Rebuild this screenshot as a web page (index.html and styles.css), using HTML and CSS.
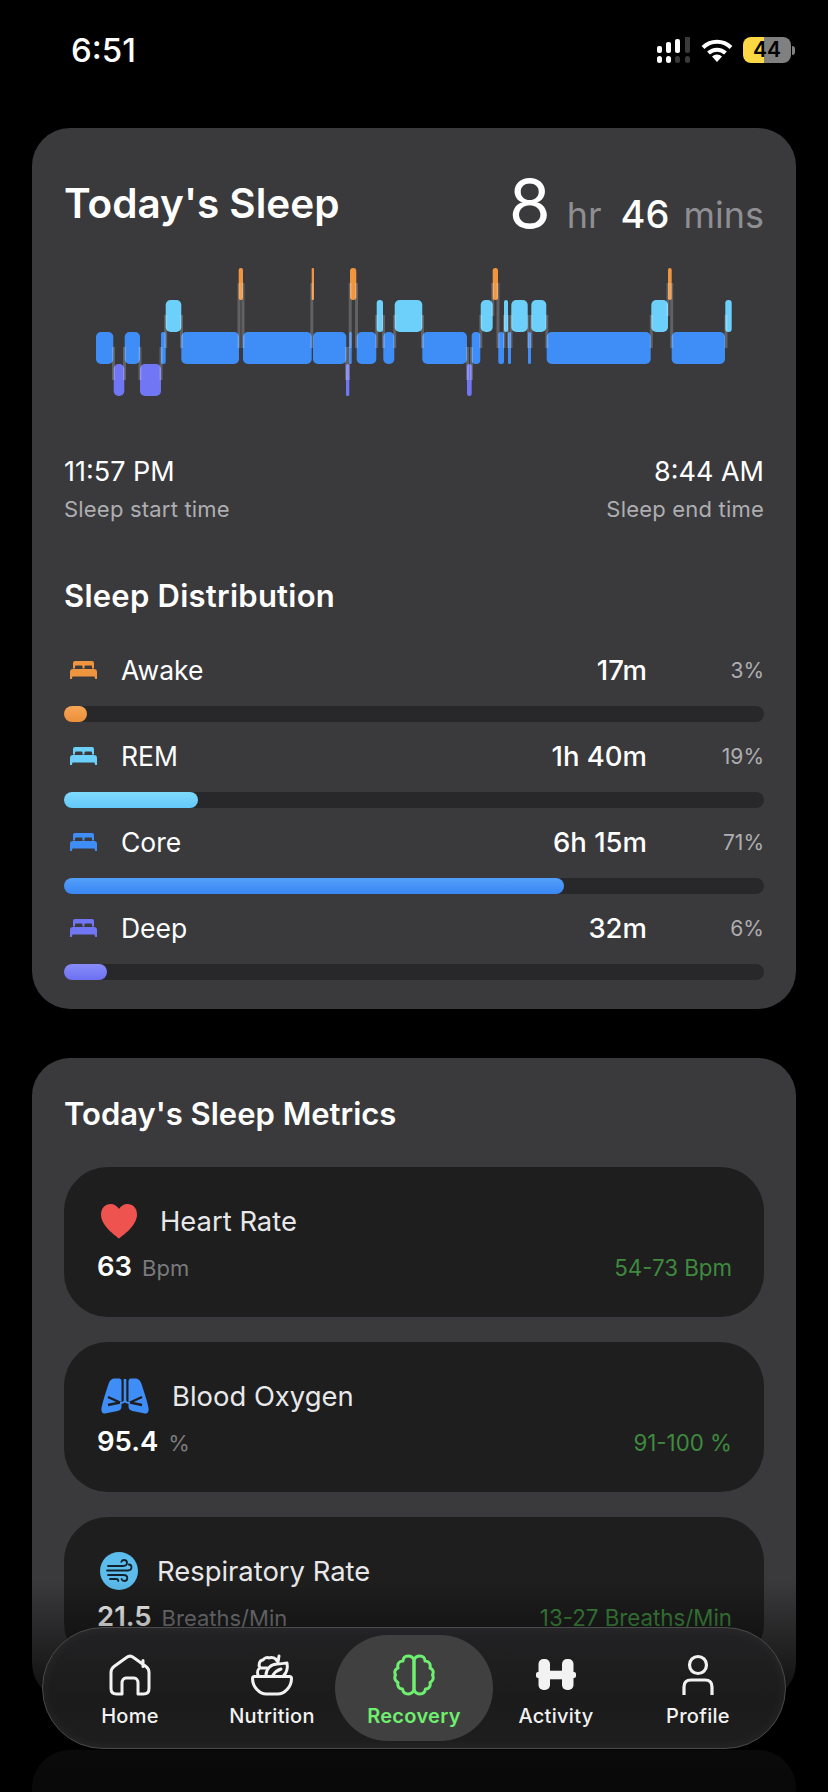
FILE: index.html
```html
<!DOCTYPE html>
<html lang="en">
<head>
  <meta charset="UTF-8">
  <title>Recovery</title>
  <link rel="stylesheet" href="styles.css">
</head>
<body>
  <svg class="defs" width="0" height="0">
    <symbol id="bed" viewBox="0 0 27 18">
      <path fill="currentColor" d="M5 0h17a2 2 0 0 1 2 2v5.500h-2V5.500a1 1 0 0 0-1-1h-5.500a1 1 0 0 0-1 1v2h-2v-2a1 1 0 0 0-1-1H6a1 1 0 0 0-1 1v2H3V2a2 2 0 0 1 2-2z"/>
      <path fill="currentColor" d="M3 8h21a3 3 0 0 1 3 3v7h-1.800l-.7-2.500H2.500L1.800 18H0v-7a3 3 0 0 1 3-3z"/>
    </symbol>
  </svg>

  <div class="status">
    <span class="clock">6:51</span>
    <div class="status-icons">
      <svg width="33" height="26" viewBox="0 0 33 26">
        <rect x="0" y="9" width="5" height="7" rx="2" fill="#fff"/>
        <rect x="9" y="5" width="5" height="11" rx="2" fill="#fff"/>
        <rect x="18" y="2" width="5" height="14" rx="2" fill="#fff"/>
        <rect x="28" y="-1" width="5" height="17" rx="2" fill="#3a3a3a"/>
        <rect x="0" y="19" width="5" height="7" rx="2.500" fill="#fff"/>
        <rect x="9" y="19" width="5" height="7" rx="2.500" fill="#fff"/>
        <rect x="18" y="19" width="5" height="7" rx="2.500" fill="#3a3a3a"/>
        <rect x="28" y="19" width="5" height="7" rx="2.500" fill="#3a3a3a"/>
      </svg>
      <svg class="wifi" width="32" height="24" viewBox="0 0 32 24">
        <path fill="none" stroke="#fff" stroke-width="4" d="M2 9.500a20 20 0 0 1 28 0"/>
        <path fill="none" stroke="#fff" stroke-width="4" d="M7.500 15a12.500 12.500 0 0 1 17 0"/>
        <path fill="#fff" d="M16 24l-5-5.500a7.500 7.500 0 0 1 10 0z"/>
      </svg>
      <div class="battery"><span class="battery-level">44</span></div>
      <span class="battery-tip"></span>
    </div>
  </div>

  <section class="card sleep-card">
    <div class="sleep-head">
      <h1>Today's Sleep</h1>
      <div class="total">
        <span class="total-big">8</span><span class="total-unit">hr</span><span class="total-num">46</span><span class="total-unit">mins</span>
      </div>
    </div>

    <svg class="stages" width="700" height="144" viewBox="64 262 700 144">
      <!-- core -->
      <g fill="#3f8ef8">
        <rect x="96" y="332" width="17.300" height="32" rx="5"/>
        <rect x="124.700" y="332" width="15.300" height="32" rx="5"/>
        <rect x="161" y="332" width="4.700" height="32" rx="2"/>
        <rect x="181.300" y="332" width="57.700" height="32" rx="5"/>
        <rect x="243" y="332" width="68.700" height="32" rx="5"/>
        <rect x="313" y="332" width="33.300" height="32" rx="5"/>
        <rect x="349.300" y="332" width="2.400" height="32" rx="1"/>
        <rect x="356.700" y="332" width="19.600" height="32" rx="5"/>
        <rect x="383.300" y="332" width="11" height="32" rx="5"/>
        <rect x="422.300" y="332" width="44.700" height="32" rx="5"/>
        <rect x="471.700" y="332" width="8.600" height="32" rx="4"/>
        <rect x="498.300" y="332" width="5.700" height="32" rx="2.500"/>
        <rect x="508" y="332" width="3" height="32" rx="1.500"/>
        <rect x="528" y="332" width="3" height="32" rx="1.500"/>
        <rect x="546.700" y="332" width="104" height="32" rx="5"/>
        <rect x="671.700" y="332" width="53.300" height="32" rx="5"/>
      </g>
      <!-- rem -->
      <g fill="#6dd0fb">
        <rect x="165.700" y="300" width="15.600" height="32" rx="5"/>
        <rect x="376.700" y="300" width="6.300" height="32" rx="3"/>
        <rect x="394.700" y="300" width="27.600" height="32" rx="5"/>
        <rect x="480.700" y="300" width="12" height="32" rx="5"/>
        <rect x="504" y="300" width="4" height="32" rx="2"/>
        <rect x="511.300" y="300" width="16.400" height="32" rx="5"/>
        <rect x="531.300" y="300" width="15" height="32" rx="5"/>
        <rect x="651.300" y="300" width="16.700" height="32" rx="5"/>
        <rect x="725.300" y="300" width="6.400" height="32" rx="3"/>
      </g>
      <!-- deep -->
      <g fill="#7176f5">
        <rect x="113.700" y="364" width="10.600" height="32" rx="5"/>
        <rect x="140" y="364" width="21" height="32" rx="5"/>
        <rect x="346" y="364" width="3.300" height="32" rx="1.600"/>
        <rect x="467" y="364" width="4.700" height="32" rx="2.300"/>
      </g>
      <!-- awake -->
      <g fill="#f0953f">
        <rect x="238.700" y="268" width="4.300" height="32" rx="2"/>
        <rect x="311.700" y="268" width="2.300" height="32" rx="1"/>
        <rect x="350" y="268" width="6.300" height="32" rx="3"/>
        <rect x="492.700" y="268" width="5.300" height="32" rx="2.500"/>
        <rect x="668" y="268" width="3.700" height="32" rx="1.800"/>
      </g>
      <!-- transitions -->
      <g fill="#fff" fill-opacity="0.2">
        <rect x="112" y="347" width="3" height="33"/>
        <rect x="123" y="347" width="3" height="33"/>
        <rect x="138.500" y="347" width="3" height="33"/>
        <rect x="159.500" y="347" width="3" height="33"/>
        <rect x="164.200" y="315" width="3" height="33"/>
        <rect x="180" y="315" width="3" height="33"/>
        <rect x="237.500" y="283" width="3" height="65"/>
        <rect x="241.500" y="283" width="3" height="65"/>
        <rect x="310.300" y="283" width="3" height="65"/>
        <rect x="348.700" y="283" width="3" height="65"/>
        <rect x="355" y="283" width="3" height="65"/>
        <rect x="345" y="347" width="3" height="33"/>
        <rect x="348" y="347" width="2" height="33"/>
        <rect x="375.200" y="315" width="3" height="33"/>
        <rect x="382" y="315" width="3" height="33"/>
        <rect x="393.200" y="315" width="3" height="33"/>
        <rect x="421" y="315" width="3" height="33"/>
        <rect x="466" y="347" width="3" height="33"/>
        <rect x="470" y="347" width="3" height="33"/>
        <rect x="479.300" y="315" width="3" height="33"/>
        <rect x="491.300" y="283" width="3" height="33"/>
        <rect x="496.500" y="283" width="3" height="65"/>
        <rect x="503" y="315" width="2.500" height="33"/>
        <rect x="507" y="315" width="2.500" height="33"/>
        <rect x="510" y="315" width="2.500" height="33"/>
        <rect x="527" y="315" width="2.500" height="33"/>
        <rect x="530" y="315" width="2.500" height="33"/>
        <rect x="545.300" y="315" width="3" height="33"/>
        <rect x="649.800" y="315" width="3" height="33"/>
        <rect x="666.500" y="283" width="3" height="33"/>
        <rect x="670.200" y="283" width="3" height="65"/>
        <rect x="724.500" y="315" width="3" height="33"/>
      </g>
    </svg>

    <div class="times">
      <div>
        <div class="time">11:57 PM</div>
        <div class="time-label">Sleep start time</div>
      </div>
      <div class="times-end">
        <div class="time">8:44 AM</div>
        <div class="time-label">Sleep end time</div>
      </div>
    </div>

    <h2 class="dist-title">Sleep Distribution</h2>

    <div class="stage awake">
      <div class="stage-row">
        <svg class="bed" width="27" height="18"><use href="#bed"/></svg>
        <span class="stage-name">Awake</span>
        <span class="stage-time">17m</span>
        <span class="stage-pct">3%</span>
      </div>
      <div class="track"><div class="fill" style="width:23px"></div></div>
    </div>
    <div class="stage rem">
      <div class="stage-row">
        <svg class="bed" width="27" height="18"><use href="#bed"/></svg>
        <span class="stage-name">REM</span>
        <span class="stage-time">1h 40m</span>
        <span class="stage-pct">19%</span>
      </div>
      <div class="track"><div class="fill" style="width:134px"></div></div>
    </div>
    <div class="stage core">
      <div class="stage-row">
        <svg class="bed" width="27" height="18"><use href="#bed"/></svg>
        <span class="stage-name">Core</span>
        <span class="stage-time">6h 15m</span>
        <span class="stage-pct">71%</span>
      </div>
      <div class="track"><div class="fill" style="width:500px"></div></div>
    </div>
    <div class="stage deep">
      <div class="stage-row">
        <svg class="bed" width="27" height="18"><use href="#bed"/></svg>
        <span class="stage-name">Deep</span>
        <span class="stage-time">32m</span>
        <span class="stage-pct">6%</span>
      </div>
      <div class="track"><div class="fill" style="width:43px"></div></div>
    </div>
  </section>

  <section class="card metrics-card">
    <h2 class="metrics-title">Today's Sleep Metrics</h2>

    <div class="metric">
      <div class="metric-head">
        <svg width="38" height="36" viewBox="0 0 38 36">
          <path fill="#ef5350" d="M19 35.500C16 33 1 23 1 11.500 1 5 5.500 1 10.500 1c3.700 0 6.800 2 8.500 5 1.700-3 4.800-5 8.500-5C32.500 1 37 5 37 11.500 37 23 22 33 19 35.500z"/>
        </svg>
        <span class="metric-name">Heart Rate</span>
      </div>
      <div class="metric-values">
        <span class="metric-num">63</span><span class="metric-unit">Bpm</span>
        <span class="metric-range">54-73 Bpm</span>
      </div>
    </div>

    <div class="metric">
      <div class="metric-head">
        <svg width="50" height="36" viewBox="0 0 50 36">
          <path fill="#3f8ef8" d="M21.500 3c0-2-1.500-2.500-3.500-2.500h-3C11 .5 9.500 3 8.500 6 6 14 3 22 1.500 30 1 33 2 36 5 35.500L17.500 33c3-1 4-2 4-5z"/>
          <path fill="#3f8ef8" d="M28.500 3c0-2 1.500-2.500 3.500-2.500h3c4 0 5.500 2.500 6.500 5.500 2.500 8 5.500 16 7 24 .5 3-.5 6-3.500 5.500L32.500 33c-3-1-4-2-4-5z"/>
          <path fill="none" stroke="#1e1e1e" stroke-width="2.400" d="M8 19l12 5.500-12 2.500M42 19l-12 5.500 12 2.500M25 0v22"/>
          <path fill="none" stroke="#3f8ef8" stroke-width="2.600" d="M25 1v22"/>
          <path fill="none" stroke="#3f8ef8" stroke-width="2.200" d="M20 25c3 0 4-.5 5-2 1 1.500 2 2 5 2"/>
        </svg>
        <span class="metric-name">Blood Oxygen</span>
      </div>
      <div class="metric-values">
        <span class="metric-num">95.4</span><span class="metric-unit">%</span>
        <span class="metric-range">91-100 %</span>
      </div>
    </div>

    <div class="metric metric-resp">
      <div class="metric-head">
        <svg width="38" height="38" viewBox="0 0 38 38">
          <circle cx="19" cy="19" r="19" fill="#5cbdec"/>
          <path fill="none" stroke="#12222c" stroke-width="1.800" stroke-linecap="round" d="M8 14h15c3 0 4-1.500 4-3.200 0-1.800-1.500-2.800-3-2.800-1.300 0-2.300.8-2.600 1.800M7 18.500h21c2.200 0 3.500-1.500 3.500-3.200 0-1.600-1.300-2.800-2.800-2.800M8 23h15.500c2.500 0 3.800 1.300 3.800 3 0 1.700-1.300 3-3 3-1.300 0-2.400-.8-2.800-2M10 27h6c1.400 0 2.300.8 2.300 2"/>
        </svg>
        <span class="metric-name">Respiratory Rate</span>
      </div>
      <div class="metric-values">
        <span class="metric-num">21.5</span><span class="metric-unit">Breaths/Min</span>
        <span class="metric-range">13-27 Breaths/Min</span>
      </div>
    </div>
  </section>

  <section class="card next-card"></section>

  <div class="fade"></div>

  <nav class="tabbar">
    <a class="tab">
      <svg width="42" height="42" viewBox="0 0 42 42" fill="none" stroke="currentColor" stroke-width="3" stroke-linejoin="round" stroke-linecap="round">
        <path d="M34 6.500v6M13 40H7.500C4 40 2 38 2 34.500V18.500c0-2.500 1-4.500 3-6L17.500 3.500c2.200-1.700 4.800-1.700 7 0L37 12.500c2 1.500 3 3.500 3 6v16c0 3.500-2 5.500-5.500 5.500H29V29c0-3-1.800-5-4-5h-8c-2.200 0-4 2-4 5z"/>
      </svg>
      <span>Home</span>
    </a>
    <a class="tab">
      <svg width="42" height="42" viewBox="0 0 42 42" fill="none" stroke="currentColor" stroke-width="3" stroke-linejoin="round" stroke-linecap="round">
        <path d="M3.500 22.500c-1.500 0-2 1-2 2 0 8 6.500 15.500 14 15.500h11c7.500 0 14-7.500 14-15.500 0-1-.5-2-2-2z"/>
        <path d="M7 21c-1-3 0-6 2-7-2-3-.5-8 3-8 1-2 4-3 6-2 3-1.500 7 0 8 3M9 14h7"/>
        <path d="M15 21c0-6 5-11 11-11 4 0 8-1 10-1 1 5-.5 10-3 12M22 21c2-3 5-5 8-6M27 8l1-6"/>
      </svg>
      <span>Nutrition</span>
    </a>
    <a class="tab tab-active">
      <svg width="42" height="42" viewBox="0 0 42 42" fill="none" stroke="currentColor" stroke-width="3" stroke-linejoin="round" stroke-linecap="round">
        <path d="M21 6C20 3 17 2 15 2 12 2 10 4 10 7 6 7 4 10 5 14 2 15 1 18 2.500 21 1 24 2 27 5 28.500 4 32 6 35 9.500 35 10 38 12 40 15 40 18 40 20 38 21 36z"/>
        <path d="M21 6C22 3 25 2 27 2 30 2 32 4 32 7 36 7 38 10 37 14 40 15 41 18 39.500 21 41 24 40 27 37 28.500 38 32 36 35 32.500 35 32 38 30 40 27 40 24 40 22 38 21 36z"/>
      </svg>
      <span>Recovery</span>
    </a>
    <a class="tab">
      <svg width="42" height="42" viewBox="0 0 42 42" fill="#f2f2f2">
        <rect x="1" y="18" width="40" height="6" rx="2"/>
        <rect x="3.500" y="5" width="11.500" height="31" rx="5"/>
        <rect x="27" y="5" width="11.500" height="31" rx="5"/>
        <rect x="14" y="16.700" width="14" height="8.600"/>
      </svg>
      <span>Activity</span>
    </a>
    <a class="tab">
      <svg width="42" height="42" viewBox="0 0 42 42" fill="none" stroke="currentColor" stroke-width="3.200">
        <circle cx="21" cy="11" r="8.500"/>
        <path d="M7 41V33c0-4.500 2.500-7 7-7h14c4.500 0 7 2.500 7 7v8"/>
      </svg>
      <span>Profile</span>
    </a>
  </nav>
</body>
</html>
```

FILE: styles.css
```css
* {
  box-sizing: border-box;
}
html, body {
  margin: 0;
  height: 1792px;
  overflow: hidden;
}
body {
  position: relative;
  background: #000;
  color: #fff;
  font-family: Inter, "Noto Sans", sans-serif;
}
h1, h2 {
  margin: 0;
}
.defs {
  position: absolute;
}

.status {
  height: 128px;
  padding: 31px 33px 0 71px;
  display: flex;
  justify-content: space-between;
  align-items: flex-start;
}
.clock {
  font-size: 33px;
  font-weight: 500;
  line-height: 38px;
}
.status-icons {
  display: flex;
  align-items: center;
  margin-top: 6px;
}
.wifi {
  margin-left: 11px;
}
.battery {
  width: 48px;
  height: 26px;
  margin-left: 10px;
  border-radius: 8px;
  background: linear-gradient(90deg, #fcd844 44%, #808080 44%);
  color: #000;
  font-size: 21px;
  font-weight: 600;
  line-height: 26px;
  text-align: center;
}
.battery-tip {
  width: 3px;
  height: 9px;
  margin-left: 1px;
  border-radius: 0 3px 3px 0;
  background: #808080;
}

.card {
  margin: 0 32px 49px;
  padding: 0 32px;
  border-radius: 38px;
  background: #3a3a3c;
}

.sleep-card {
  height: 881px;
  padding-top: 38px;
}
.sleep-head {
  height: 96px;
  display: flex;
  justify-content: space-between;
  align-items: flex-start;
}
h1 {
  font-size: 40.500px;
  font-weight: 600;
  line-height: 50px;
  margin-top: 13px;
}
.total {
  display: flex;
  align-items: baseline;
  line-height: 78px;
  margin-top: -2px;
}
.total-big {
  font-size: 68px;
  font-weight: 400;
  margin-right: 16px;
}
.total-num {
  font-size: 38px;
  font-weight: 500;
  margin: 0 14px 0 19px;
}
.total-unit {
  font-size: 36px;
  color: #8e8e93;
}

.stages {
  display: block;
}

.times {
  display: flex;
  justify-content: space-between;
  margin-top: 49px;
}
.times-end {
  text-align: right;
}
.time {
  font-size: 27px;
  line-height: 34px;
}
.time-label {
  font-size: 22px;
  line-height: 28px;
  margin-top: 6px;
  letter-spacing: 0.2px;
  color: #aeaeb2;
}

h2 {
  font-size: 31px;
  font-weight: 600;
  line-height: 38px;
  margin: 54px 0 35px;
}
.dist-title {
  letter-spacing: 0.25px;
}

.stage-row {
  height: 40px;
  display: flex;
  align-items: center;
}
.stage + .stage {
  margin-top: 14px;
}
.bed {
  margin: 0 24px 0 6px;
}
.stage-name {
  flex: 1;
  font-size: 26.500px;
}
.stage-time {
  font-size: 27.500px;
  font-weight: 500;
}
.stage-pct {
  width: 117px;
  text-align: right;
  font-size: 21px;
  color: #aeaeb2;
}
.track {
  height: 16px;
  margin: 16px 0 0;
  border-radius: 8px;
  background: #28282a;
}
.fill {
  height: 16px;
  border-radius: 8px;
}
.awake .bed { color: #f0953f; }
.rem .bed { color: #6dd0fb; }
.core .bed { color: #3f8ef8; }
.deep .bed { color: #7176f5; }
.awake .fill { background: linear-gradient(#f5a657, #ec8f3a); }
.rem .fill { background: linear-gradient(#7fd9fc, #63c9f9); }
.core .fill { background: linear-gradient(#52a0fa, #3a86f4); }
.deep .fill { background: linear-gradient(#888cf8, #6c70f2); }

.metrics-card {
  height: 643px;
  padding-top: 37px;
  overflow: hidden;
}
.metrics-title {
  margin: 0 0 34px;
}
.metric {
  height: 150px;
  margin-bottom: 25px;
  padding: 32px 32px 0 33px;
  border-radius: 44px;
  background: #1e1e1e;
}
.metric-head {
  height: 44px;
  display: flex;
  align-items: center;
  gap: 22px;
  padding-left: 3px;
}
.metric-resp .metric-head {
  gap: 19px;
}
.metric-name {
  font-size: 27.400px;
  color: #e8e8ea;
}
.metric-values {
  display: flex;
  align-items: baseline;
  margin-top: 6px;
}
.metric-num {
  font-size: 27.500px;
  font-weight: 600;
  margin-right: 10px;
}
.metric-unit {
  font-size: 22px;
  color: #7a7a7e;
}
.metric-range {
  margin-left: auto;
  font-size: 22.300px;
  color: #3f8a3f;
}

.next-card {
  height: 42px;
  margin-bottom: 0;
  border-radius: 38px 38px 0 0;
}

.fade {
  position: absolute;
  left: 0;
  right: 0;
  top: 1580px;
  bottom: 0;
  background: linear-gradient(rgba(0, 0, 0, 0), rgba(0, 0, 0, 0.8) 60%, rgba(0, 0, 0, 0.85));
}

.tabbar {
  position: absolute;
  left: 42px;
  top: 1627px;
  width: 744px;
  height: 122px;
  padding: 7px 16px;
  display: grid;
  grid-template-columns: repeat(5, 1fr);
  border: 1.500px solid #4a4a4a;
  border-radius: 61px;
  background: linear-gradient(#222224, #1b1b1b 60%, #1e1e1e);
  box-shadow: inset 0 0 14px rgba(255, 255, 255, 0.05);
}
.tab {
  display: flex;
  flex-direction: column;
  align-items: center;
  color: #f2f2f2;
  padding-top: 19px;
  font-size: 20px;
  font-weight: 500;
  letter-spacing: 0.3px;
}
.tab span {
  margin-top: 7px;
  line-height: 26px;
}
.tab-active {
  margin: 0 -8px;
  border-radius: 53px;
  background: #404040;
  color: #6fef6f;
  font-weight: 600;
}
```
